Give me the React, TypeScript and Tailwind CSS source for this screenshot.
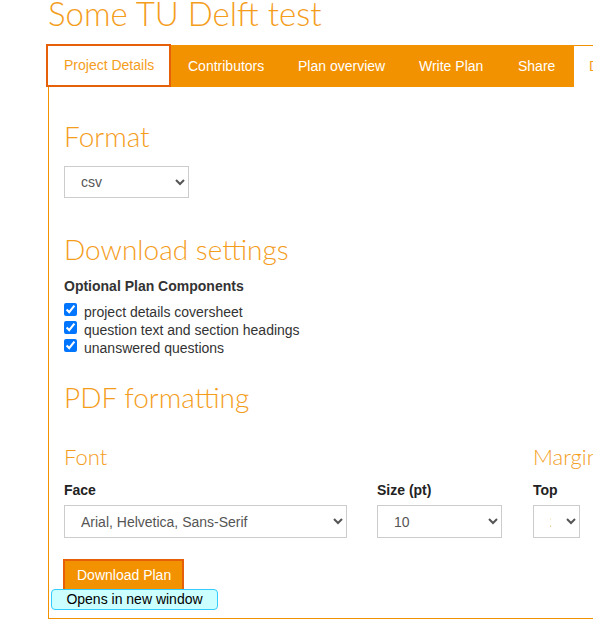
import React from "react";

const heading = "font-['Lato',sans-serif] font-light text-[#f49d1c] leading-none whitespace-nowrap";

export default function App() {
  return (
    <div className="w-[593px] h-[628px] overflow-hidden bg-white relative font-['Liberation_Sans',Arial,sans-serif] text-[14px] text-[#333]">
      <div className="pl-[48px]">
        <h1 className="font-['Lato',sans-serif] font-light text-[#f49d1c] whitespace-nowrap text-[33px] leading-[27px] h-[42px]">Some TU Delft test</h1>
        <div className="flex h-[42px] -ml-[2px] w-[700px] mt-[3px]">
          <div className="flex-none w-[125px] h-[43px] -mt-[1px] border-2 border-[#e6600a] bg-white text-[#f49d1c] pl-[16px] flex items-center whitespace-nowrap">
            Project Details
          </div>
          <div className="flex bg-[#f39200] text-white h-[42px]">
            <div className="w-[110px] pl-[17px] flex items-center whitespace-nowrap">Contributors</div>
            <div className="w-[121px] pl-[17px] flex items-center whitespace-nowrap">Plan overview</div>
            <div className="w-[99px] pl-[17px] flex items-center whitespace-nowrap">Write Plan</div>
            <div className="w-[73px] pl-[17px] flex items-center whitespace-nowrap">Share</div>
          </div>
          <div className="flex-none w-[120px] border-t border-[#f39200] bg-white text-[#f49d1c] pl-[15px] flex items-center whitespace-nowrap">
            Download
          </div>
        </div>
        <div className="w-[700px] border-l border-b border-[#f39200] pl-[15px] pt-[35px] pb-[28px]">
          <h2 className={`${heading} text-[28px] h-[29px]`}>Format</h2>
          <select className="mt-[15px] block w-[125px] h-[32px] border border-[#ccc] bg-white text-[#555] pl-[12px] text-[14px]">
            <option>csv</option>
          </select>
          <h2 className={`${heading} text-[28px] h-[29px] mt-[37px]`}>Download settings</h2>
          <div className="mt-[12px] font-bold leading-[20px]">Optional Plan Components</div>
          <div className="mt-[7px]">
            {["project details coversheet", "question text and section headings", "unanswered questions"].map((t) => (
              <label key={t} className="flex items-start h-[18px] leading-[18px]">
                <input type="checkbox" defaultChecked className="w-[13px] h-[13px] mt-[0px] mr-[7px]" />
                <span>{t}</span>
              </label>
            ))}
          </div>
          <h2 className={`${heading} text-[28px] h-[29px] mt-[26px]`}>PDF formatting</h2>
          <div className="flex mt-[34px]">
            <div className="flex-none w-[469px]">
              <h3 className={`${heading} text-[22px] h-[22px]`}>Font</h3>
              <div className="flex mt-[12px]">
                <div className="flex-none w-[313px]">
                  <div className="font-bold leading-[20px] text-[#222]">Face</div>
                  <select className="mt-[5px] block w-[283px] h-[33px] border border-[#ccc] bg-white text-[#555] pl-[12px] text-[14px]">
                    <option>Arial, Helvetica, Sans-Serif</option>
                  </select>
                </div>
                <div className="flex-none w-[125px]">
                  <div className="font-bold leading-[20px] text-[#222]">Size (pt)</div>
                  <select className="mt-[5px] block w-[125px] h-[33px] border border-[#ccc] bg-white text-[#555] pl-[12px] text-[14px]">
                    <option>10</option>
                  </select>
                </div>
              </div>
            </div>
            <div className="flex-none w-[200px]">
              <h3 className={`${heading} text-[22px] h-[22px]`}>Margin (mm)</h3>
              <div className="mt-[12px]">
                <div className="font-bold leading-[20px] text-[#222]">Top</div>
                <select className="mt-[5px] block w-[47px] h-[33px] border border-[#ccc] bg-white text-[#555] pl-[12px] pr-[12px] text-[14px]">
                  <option>20</option>
                </select>
              </div>
            </div>
          </div>
          <div className="relative mt-[20px] h-[32px]">
            <button className="absolute left-[-1px] top-[1px] w-[121px] h-[32px] bg-[#f39200] border-2 border-[#e6600a] text-white text-left pl-[12px] text-[14px]">
              Download Plan
            </button>
            <div className="absolute left-[-13px] top-[31px] w-[167px] h-[21px] bg-[#ccffff] border border-[#33ccff] rounded-[4px] text-black text-center leading-[19px] whitespace-nowrap">
              Opens in new window
            </div>
          </div>
        </div>
      </div>
    </div>
  );
}
